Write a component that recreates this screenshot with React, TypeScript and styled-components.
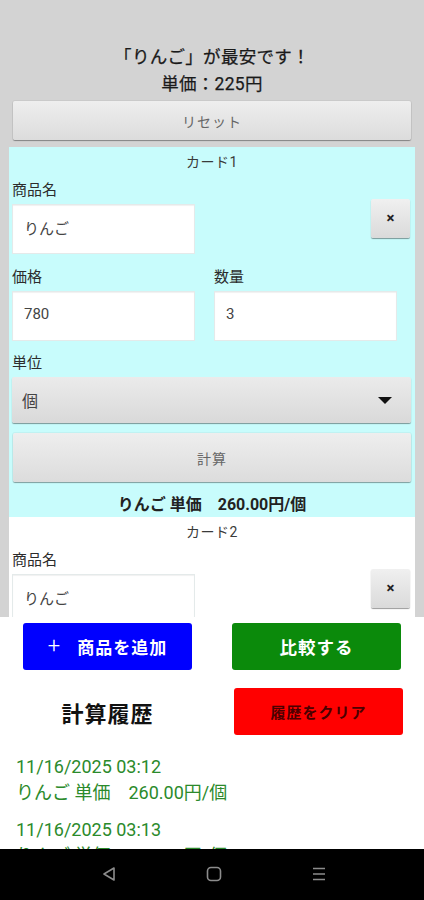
import React from "react";
import styled, { createGlobalStyle } from "styled-components";

const GlobalStyle = createGlobalStyle`
  html, body {
    margin: 0;
    padding: 0;
    background: #000;
  }
  body {
    font-family: Roboto, "Noto Sans CJK JP", "Noto Sans", sans-serif;
  }
  * {
    box-sizing: border-box;
  }
`;

const Screen = styled.div`
  width: 424px;
  height: 900px;
  display: flex;
  flex-direction: column;
  overflow: hidden;
`;

const ScrollArea = styled.div`
  height: 617px;
  flex-shrink: 0;
  overflow: hidden;
  background: #d3d3d3;
  padding: 44px 9px 0;
`;

const Headline = styled.div`
  text-align: center;
  font-size: 17.5px;
  line-height: 27px;
  color: #1a1a1a;
  letter-spacing: 0.3px;
  -webkit-text-stroke: 0.25px #1a1a1a;
`;

const GrayButton = styled.div<{ $h: number }>`
  height: ${(p) => p.$h}px;
  display: flex;
  align-items: center;
  justify-content: center;
  margin: 0 4px;
  background: linear-gradient(#eeeeee, #dcdcdc);
  border-radius: 2px;
  box-shadow: 0 1px 1px rgba(0, 0, 0, 0.35), 0 0 0 1px rgba(0, 0, 0, 0.04);
  color: #666;
  font-size: 14px;
  letter-spacing: 1px;
`;

const ResetButton = styled(GrayButton)`
  margin-top: 3px;
  margin-bottom: 7px;
`;

const Card = styled.div<{ $bg: string }>`
  background: ${(p) => p.$bg};
  padding: 4px 3px 0;
`;

const CardTitle = styled.div`
  text-align: center;
  font-size: 14px;
  line-height: 22px;
  color: #3a3a3a;
  letter-spacing: 0.5px;
  margin-bottom: 7px;
`;

const Label = styled.div`
  font-size: 15px;
  line-height: 20px;
  color: #2c2c2c;
  margin-bottom: 4px;
`;

const NameRow = styled.div`
  display: flex;
  align-items: center;
  justify-content: space-between;
`;

const Field = styled.div`
  display: flex;
  flex-direction: column;
`;

const Input = styled.div`
  width: 183px;
  height: 50px;
  background: #fff;
  border: 1px solid #e4eaea;
  box-shadow: inset 0 1px 1px rgba(0, 0, 0, 0.06);
  display: flex;
  align-items: center;
  padding: 0 0 4px 11px;
  font-size: 15px;
  color: #444;
`;

const CloseButton = styled.div`
  width: 39px;
  height: 39px;
  margin-right: 2px;
  margin-top: 2px;
  display: flex;
  align-items: center;
  justify-content: center;
  background: linear-gradient(#f0f0f0, #dadada);
  border-radius: 2px;
  box-shadow: 0 1px 1px rgba(0, 0, 0, 0.4);
  font-size: 15px;
  font-weight: 700;
  color: #222;
`;

const PairRow = styled.div`
  display: grid;
  grid-template-columns: 183px 183px;
  column-gap: 19px;
  margin-top: 13px;
`;

const UnitBlock = styled.div`
  margin-top: 12px;
`;

const Select = styled.div`
  height: 46px;
  margin-right: 1px;
  display: flex;
  align-items: center;
  justify-content: space-between;
  padding: 0 19px 0 10px;
  background: linear-gradient(#ebebeb, #d9d9d9);
  border-radius: 2px;
  box-shadow: 0 1px 1px rgba(0, 0, 0, 0.4);
  font-size: 16px;
  color: #444;
`;

const Caret = styled.div`
  width: 0;
  height: 0;
  border-left: 7px solid transparent;
  border-right: 7px solid transparent;
  border-top: 7px solid #111;
`;

const CalcButton = styled(GrayButton)`
  margin: 10px 1px 0 1px;
`;

const Result = styled.div`
  text-align: center;
  font-size: 16px;
  font-weight: 700;
  color: #222;
  line-height: 22px;
  padding: 12px 0 1px;
  white-space: pre;
`;

const BottomPanel = styled.div`
  height: 232px;
  flex-shrink: 0;
  background: #fff;
  padding: 6px 23px 0;
  overflow: hidden;
`;

const ActionGrid = styled.div`
  display: grid;
  grid-template-columns: 169px 169px;
  column-gap: 40px;
  row-gap: 18px;
  align-items: center;
`;

const ActionButton = styled.div<{ $bg: string; $fg: string; $size: number; $shift?: number }>`
  height: 47px;
  border-radius: 3px;
  background: ${(p) => p.$bg};
  color: ${(p) => p.$fg};
  font-size: ${(p) => p.$size}px;
  font-weight: 700;
  display: flex;
  align-items: center;
  justify-content: center;
  gap: 16px;
  transform: translateX(${(p) => p.$shift ?? 0}px);
  letter-spacing: 1px;
`;

const PlusSign = styled.span`
  font-size: 22px;
  font-weight: 300;
  line-height: 1;
  margin-top: -2px;
`;

const HistoryTitle = styled.div`
  text-align: center;
  font-size: 22px;
  font-weight: 700;
  color: #111;
  letter-spacing: 1px;
`;

const HistoryList = styled.div`
  margin: 19px -7px 0;
  display: flex;
  flex-direction: column;
  gap: 11px;
`;

const HistoryEntry = styled.div`
  display: flex;
  flex-direction: column;
  color: #2b8a2b;
  font-size: 18px;
  line-height: 26px;
  white-space: pre;
`;

const NavBar = styled.div`
  flex: 1;
  background: #000;
  display: flex;
  align-items: center;
  justify-content: space-between;
  padding: 0 96px 2px 100px;
`;

const NavIcon = styled.svg`
  width: 18px;
  height: 18px;
  stroke: #8c8c8c;
  fill: none;
  stroke-width: 1.6;
`;

type CardData = {
  title: string;
  bg: string;
  name: string;
  price: string;
  qty: string;
  unit: string;
  result: string;
};

const cards: CardData[] = [
  { title: "カード1", bg: "#c8fcfc", name: "りんご", price: "780", qty: "3", unit: "個", result: "りんご 単価　260.00円/個" },
  { title: "カード2", bg: "#ffffff", name: "りんご", price: "900", qty: "4", unit: "個", result: "りんご 単価　225.00円/個" },
];

const history = [
  { date: "11/16/2025 03:12", text: "りんご 単価　260.00円/個" },
  { date: "11/16/2025 03:13", text: "りんご 単価　225.00円/個" },
];

const ProductCard = ({ card }: { card: CardData }) => (
  <Card $bg={card.bg}>
    <CardTitle>{card.title}</CardTitle>
    <NameRow>
      <Field>
        <Label>商品名</Label>
        <Input>{card.name}</Input>
      </Field>
      <CloseButton>×</CloseButton>
    </NameRow>
    <PairRow>
      <Field>
        <Label>価格</Label>
        <Input>{card.price}</Input>
      </Field>
      <Field>
        <Label>数量</Label>
        <Input>{card.qty}</Input>
      </Field>
    </PairRow>
    <UnitBlock>
      <Label>単位</Label>
      <Select>
        <span>{card.unit}</span>
        <Caret />
      </Select>
    </UnitBlock>
    <CalcButton $h={49}>計算</CalcButton>
    <Result>{card.result}</Result>
  </Card>
);

export default function App() {
  return (
    <Screen>
      <GlobalStyle />
      <ScrollArea>
        <Headline>「りんご」が最安です！</Headline>
        <Headline>単価：225円</Headline>
        <ResetButton $h={39}>リセット</ResetButton>
        {cards.map((c) => (
          <ProductCard key={c.title} card={c} />
        ))}
      </ScrollArea>
      <BottomPanel>
        <ActionGrid>
          <ActionButton $bg="#0000ff" $fg="#fff" $size={17}>
            <PlusSign>+</PlusSign>
            <span>商品を追加</span>
          </ActionButton>
          <ActionButton $bg="#0b8a0b" $fg="#fff" $size={17.5}>
            比較する
          </ActionButton>
          <HistoryTitle>計算履歴</HistoryTitle>
          <ActionButton $bg="#ff0000" $fg="#4a0000" $size={15} $shift={2}>
            履歴をクリア
          </ActionButton>
        </ActionGrid>
        <HistoryList>
          {history.map((h) => (
            <HistoryEntry key={h.date}>
              <span>{h.date}</span>
              <span>{h.text}</span>
            </HistoryEntry>
          ))}
        </HistoryList>
      </BottomPanel>
      <NavBar>
        <NavIcon viewBox="0 0 18 18">
          <path d="M14 3 L4 9 L14 15 Z" strokeLinejoin="round" />
        </NavIcon>
        <NavIcon viewBox="0 0 18 18">
          <rect x="2.5" y="2.5" width="13" height="13" rx="3.5" />
        </NavIcon>
        <NavIcon viewBox="0 0 18 18">
          <path d="M3 3.5 H15 M3 9 H15 M3 14.5 H15" />
        </NavIcon>
      </NavBar>
    </Screen>
  );
}
